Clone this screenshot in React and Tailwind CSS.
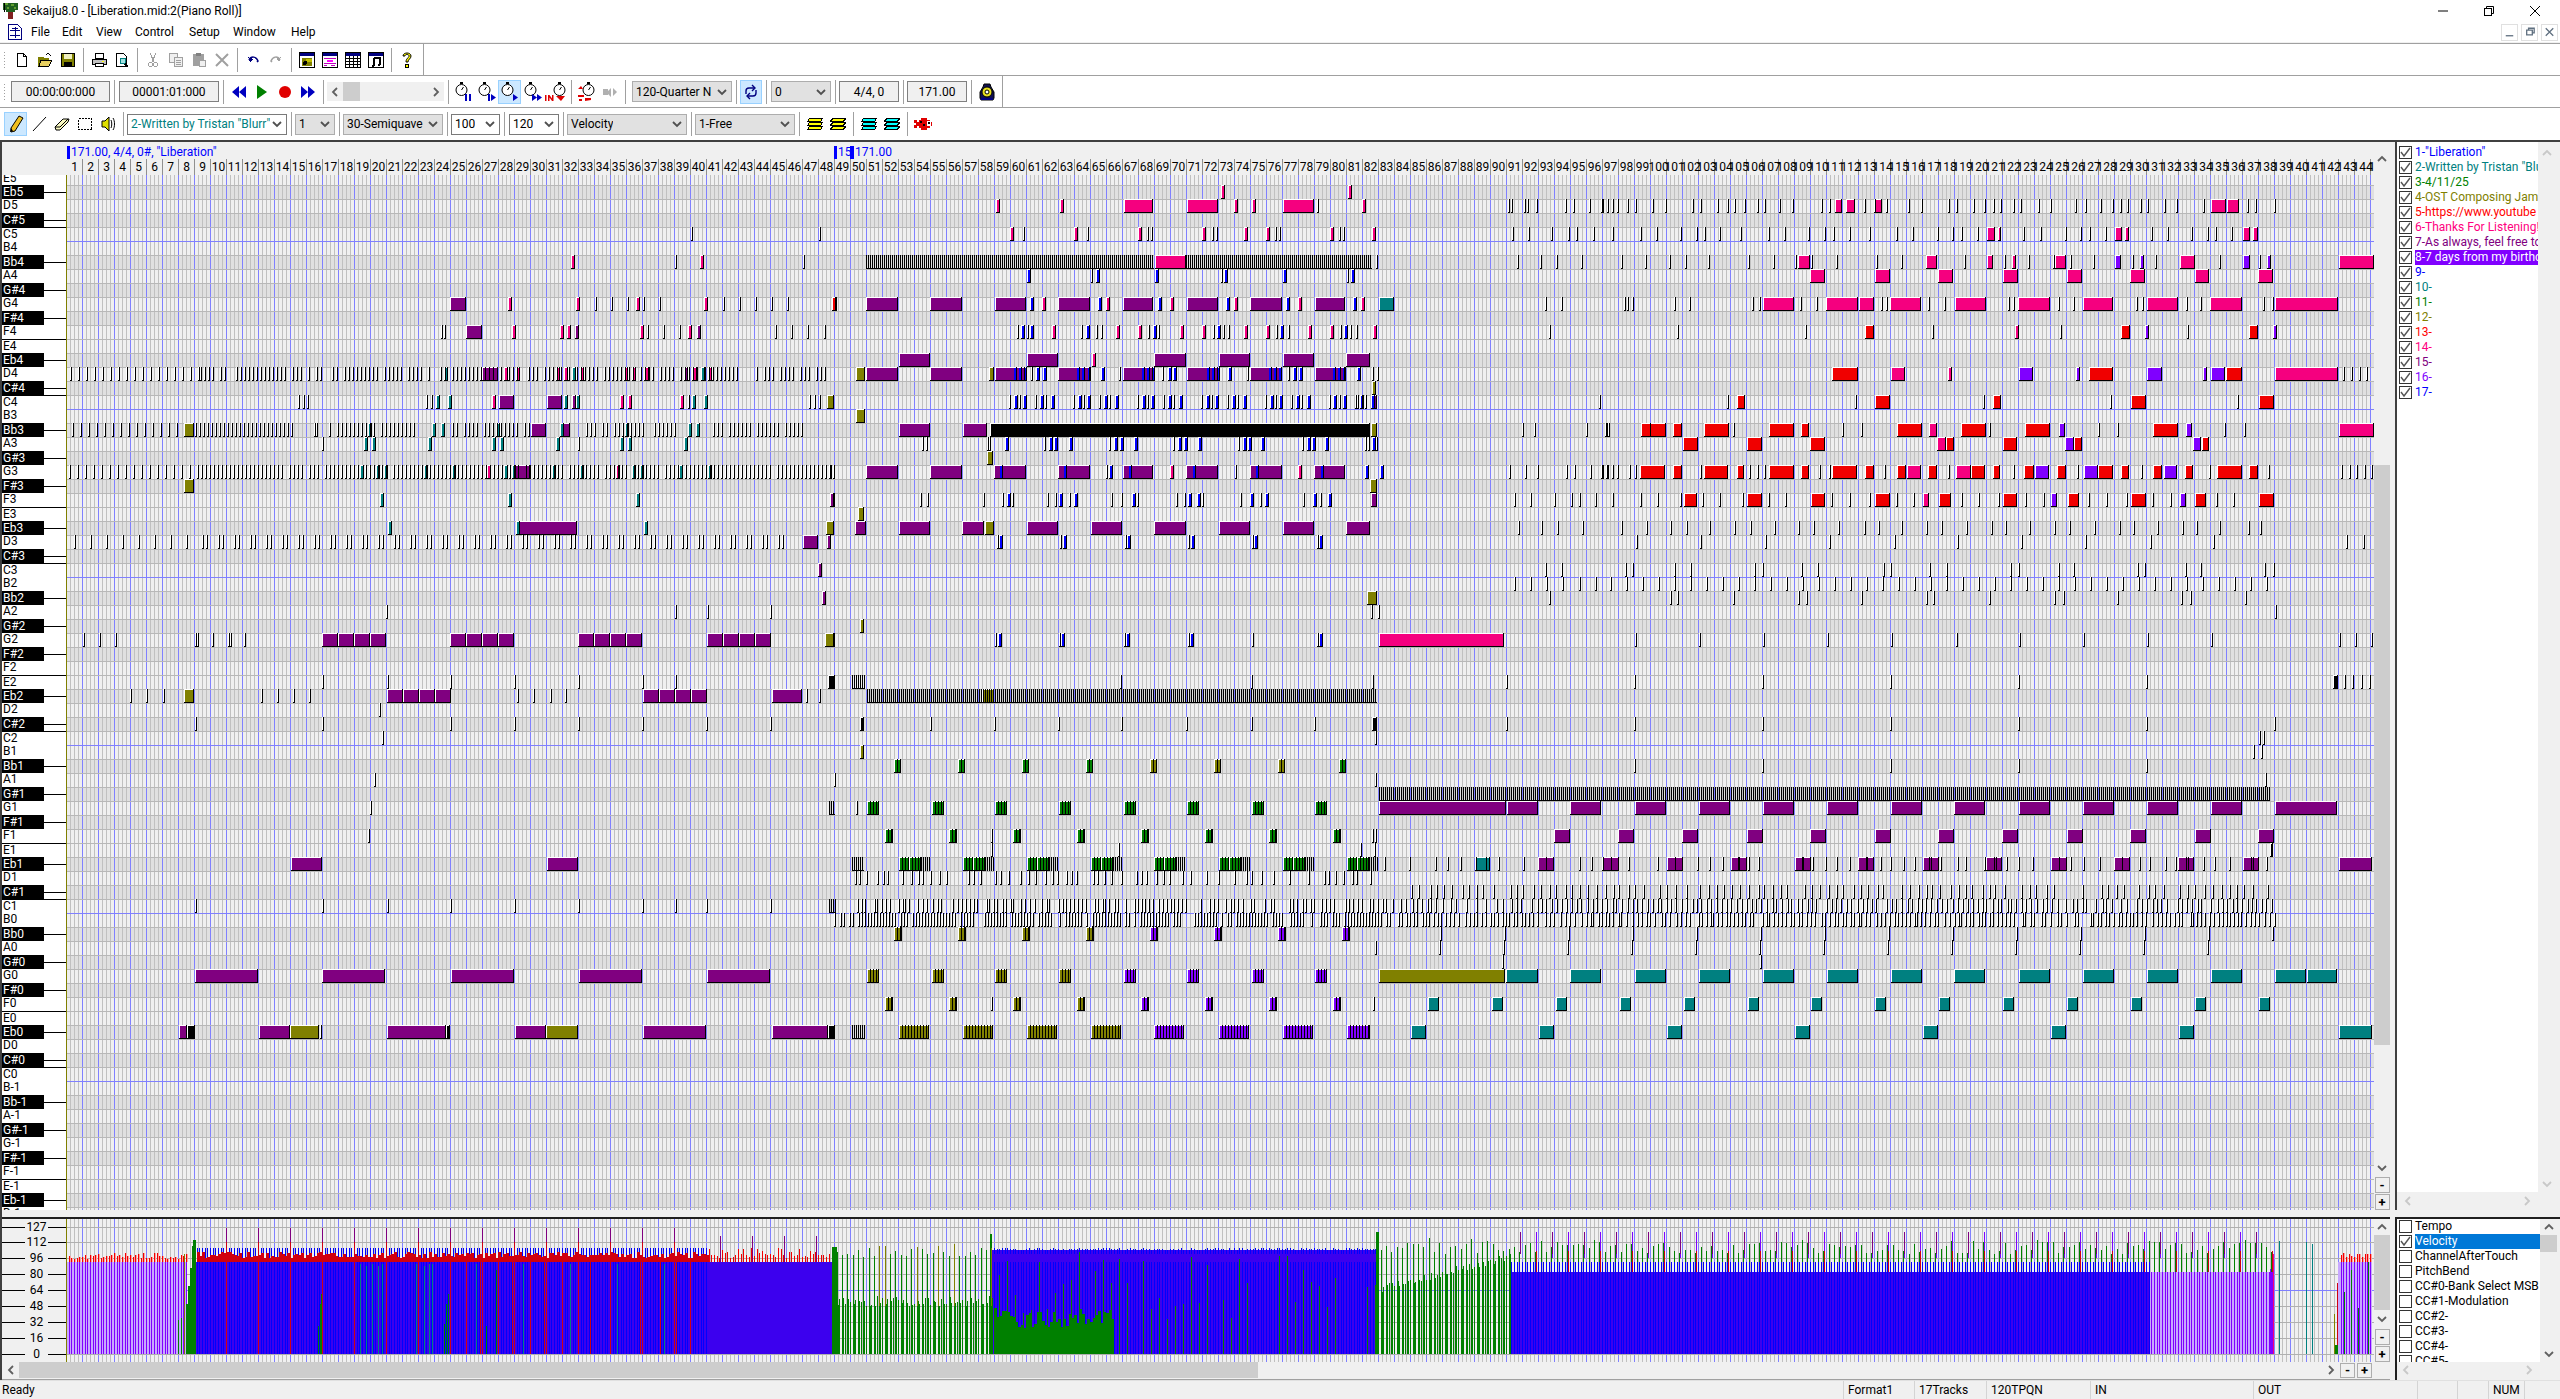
import React from 'react'

const PUR = '#800080', PINK = '#f5007f', OLV = '#808000', TEAL = '#008080', RED = '#f00000'
const VIO = '#8000ff', GRN = '#008000', BLU = '#0000ff'

// seeded noise so the picture stays the same between runs
let seed = 7
const rnd = () => {
  seed = (seed * 1664525 + 1013904223) % 4294967296
  return seed / 4294967296
}

const rect = (x, y, w, h) => `M${x} ${y}h${w}v${h}h${-w}z`

/* ---------- piano roll notes ---------- */
const white = []
const black = []
const fills = new Map()
const add = (c, d) => {
  if (!fills.has(c)) fills.set(c, [])
  fills.get(c).push(d)
}
const rowY = i => 185 + 14 * i

function note(i, a, b, c) {
  const x0 = Math.round(a), x1 = Math.round(b), y = rowY(i), w = x1 - x0
  white.push(rect(x0, y, 1, 14), rect(x0, y, w, 1))
  if (w > 2) add(c, rect(x0 + 1, y + 1, w - 2, 12))
  black.push(rect(x1 - 1, y, 1, 14), rect(x0, y + 13, w, 1))
}
const tick = (i, x) => note(i, x, x + 2, '#000')
const ctick = (i, x, c) => note(i, x, x + 4, c)
function hatch(i, a, b, step = 2) {
  for (let x = a; x < b; x += step) black.push(rect(x, rowY(i), 1, 14))
  black.push(rect(a, rowY(i) + 13, b - a, 1))
}
const each = (a, b, s, fn) => {
  for (let x = a; x <= b; x += s) fn(x)
}
// short overlapping notes that read as a striped block
function grp(i, a, b, c) {
  note(i, a, b, c)
  each(a + 3, b - 2, 3, t => black.push(rect(t, rowY(i), 1, 14)))
}

// numbers are read off the reference at these scales
const za = x => 60 + x / 2.01
const zb = x => 830 + x / 2.01
const zc = x => 1600 + x / 2.01
const zd = x => 60 + x / 1.3067
const ze = x => 1220 + x / 1.352

function row(i, z, list) {
  list.forEach(it => {
    if (typeof it === 'number') {
      if (it < 0) ctick(i, z(-it), BLU)
      else tick(i, z(it))
    } else if (it.length === 2) ctick(i, z(it[0]), it[1])
    else note(i, z(it[0]), z(it[1]), it[2])
  })
}
const pk = x => [x, PINK]
const tl = x => [x, TEAL]

function fourths(i, a, c) {
  each(0, 3, 1, k => note(i, a + k * 16, a + (k + 1) * 16, c))
}

function buildNotes() {
  row(3, za, [1268, 1526])
  row(5, za, [pk(1028), 1236, pk(1287), 1494])
  row(8, za, [[783, 816, PUR], pk(900), pk(1038), 1075, 1108, 1140, pk(1157), 1172, 1204, pk(1295), 1333, 1365, 1397, 1430, 1462, [1553, RED]])
  row(10, za, [766, 772, [817, 848, PUR], pk(908), pk(1005), pk(1020), [1035, PUR], pk(1165), 1180, 1212, 1245, pk(1262), [1280, PUR], 1437, 1470, 1502, 1535])
  each(70, 200, 8, x => tick(13, x))
  each(200, 830, 4, x => { if (rnd() > 0.22) tick(13, x) })
  row(13, za, [tl(772), [849, 880, PUR], pk(892), pk(917), pk(997), pk(1013), tl(1029), pk(1046), pk(1133), pk(1150), pk(1175), [1255, PUR], pk(1272), tl(1288), pk(1303)])
  row(15, za, [478, 488, 496, 735, 745, tl(755), tl(780), pk(868), [882, 913, PUR], [979, 1010, PUR], tl(1013), [1029, PUR], tl(1037), pk(1126), pk(1141), pk(1246), 1262, tl(1270), tl(1295), 1505, 1515, 1525, [1541, 1556, OLV]])
  each(72, 176, 8, x => tick(17, x))
  each(195, 291, 4, x => tick(17, x))
  row(17, za, [[250, 269, OLV], 510, 515, tl(620), tl(748), tl(765), tl(877), [946, 977, PUR], tl(1005), [1010, 1026, PUR], tl(1135), tl(1262), tl(1278)])
  each(329, 418, 4, x => { if (rnd() > 0.1) tick(17, x) })
  each(452, 528, 4, x => { if (rnd() > 0.1) tick(17, x) })
  each(586, 675, 4, x => { if (rnd() > 0.15) tick(17, x) })
  each(713, 804, 4, x => { if (rnd() > 0.15) tick(17, x) })
  row(18, za, [527, tl(611), tl(627), tl(740), tl(868), tl(885), tl(997), 1041, tl(1125), tl(1141), tl(1254)])
  each(69, 189, 8, x => tick(20, x))
  each(197, 834, 4, x => { if (rnd() > 0.1) tick(20, x) })
  row(20, za, [tl(603), tl(635), tl(651), tl(732), tl(788), pk(859), tl(892), tl(908), [915, 945, PUR], tl(989), tl(1046), pk(1118), tl(1150), tl(1165), tl(1245), tl(1303)])
  row(21, za, [[250, 269, OLV]])
  row(22, za, [tl(643), tl(901), tl(1158), [1548, 1558, PUR]])
  row(24, za, [tl(659), tl(917), [918, 1040, PUR], tl(1174), [1540, 1556, OLV]])
  each(74, 186, 16, x => tick(25, x))
  each(202, 790, 16, x => { tick(25, x); tick(25, x + 4) })
  row(25, za, [[1493, 1524, PUR], [1541, 1549, PUR]])
  row(27, za, [[1524, 1532, PUR]])
  row(29, za, [[1532, 1540, PUR]])
  row(30, za, [656, 1236, 1300, 1428])
  row(32, za, [46, 78, 110, 272, 276, 305, 338, 342, 370, [1538, 1557, OLV]])
  ;[322, 450, 578, 707].forEach(x => fourths(32, x, PUR))

  // middle section, measures 50-100
  row(0, zb, [pk(785), pk(1041)])
  row(1, zb, [pk(334), pk(462), [590, 650, PINK], [717, 779, PINK], pk(812), pk(848), [911, 973, PINK], 978, pk(1069), 1363, 1368, 1395, 1400, 1420, 1478, 1493, 1525, 1550, 1562])
  row(3, zb, [pk(362), 388, pk(490), 517, pk(619), 637, 645, pk(747), 767, 775, pk(832), pk(876), 895, 903, pk(1005), 1023, 1031, pk(1090), 1370, 1403, 1450, 1483, 1500, 1533])
  hatch(5, 866, 1154)
  hatch(5, 1186, 1372)
  row(5, zb, [[653, 715, PINK], 1097, 1380, 1428, 1460, 1510])
  row(6, zb, [-395, 525, -535, -653, 785, -792, -910, 1040, -1048])
  row(8, zb, [[5, RED], [73, 136, PUR], [202, 265, PUR], [331, 394, PUR], -403, pk(426), [459, 522, PUR], -538, pk(555), [588, 650, PUR], -660, pk(684), [717, 779, PUR], -795, pk(812), [845, 908, PUR], -917, pk(941), [974, 1036, PUR], -1052, pk(1068), [1103, 1134, TEAL], 1437, 1470])
  row(10, zb, [375, -384, 395, -402, pk(446), 505, -515, 535, 545, pk(575), pk(619), 640, -650, 660, pk(704), pk(747), 770, -778, 790, 800, pk(832), pk(876), 897, -905, 920, pk(961), pk(1005), 1025, -1033, 1045, 1058, pk(1092), 1445])
  row(12, zb, [[138, 201, PUR], [395, 458, PUR], pk(527), [652, 716, PUR], [781, 844, PUR], [911, 973, PUR], [1038, 1085, PUR]])
  row(13, zb, [[53, 70, OLV], [73, 136, PUR], [202, 265, PUR], [320, 330, OLV], [331, 392, PUR], -368, -378, -388, 405, -415, -428, [459, 522, PUR], -495, -505, -516, -545, 580, [588, 650, PUR], -625, -635, -645, 668, -680, -690, [717, 779, PUR], -755, -765, -775, -800, 838, [845, 908, PUR], -880, -890, -900, 920, -930, -942, [974, 1036, PUR], -1010, -1020, -1030, -1060, 1090, 1100])
  row(14, zb, [[1090, 1098, OLV]])
  each(0, 5, 1, k => {
    const a = 360 + k * 128.6
    row(15, zb, [a, -(a + 9), a + 20, -(a + 28), a + 52, -(a + 62), a + 72, -(a + 84)])
  })
  row(15, zb, [[0, 8, OLV], 1060, 1068, [1092, 1100, PUR], 1545])
  row(16, zb, [[53, 70, OLV]])
  row(17, zb, [[138, 201, PUR], [267, 316, PUR], [322, 1085, '#000'], [1087, 1100, OLV], 1390, 1415, 1520, 1560])
  row(18, zb, [185, 192, 315, 320, -352, 430, -440, -450, -480, 560, -570, -582, -612, 690, -700, -712, -740, 820, -830, -840, -866, 948, -958, -968, -995, 1075, 1082, -1090, 1098])
  row(19, zb, [[315, 328, OLV]])
  row(20, zb, [0, [73, 136, PUR], [200, 265, PUR], [330, 393, PUR], -340, [458, 522, PUR], -468, 555, -560, [588, 650, PUR], -598, pk(683), [716, 779, PUR], -728, 815, [845, 908, PUR], -855, pk(941), [972, 1036, PUR], -985, -1075, -1105, 1365, 1397, 1422, 1480, 1495, 1527, 1550, 1560])
  row(21, zb, [[1085, 1100, OLV]])
  row(22, zb, [[0, 8, PUR], 180, 195, 308, 345, -355, 365, 437, 453, -460, 480, -490, 565, 585, -608, 618, 695, 712, -720, -738, 748, 825, -845, 865, -875, 950, -970, 985, -1000, [1088, 1100, PUR], 1375, 1407, 1455, 1490, 1505, 1537])
  row(23, zb, [[57, 68, OLV]])
  row(24, zb, [[0, 8, OLV], [50, 72, PUR], [138, 201, PUR], [266, 310, PUR], [311, 330, OLV], [395, 458, PUR], [525, 587, PUR], [652, 716, PUR], [781, 844, PUR], [911, 973, PUR], [1038, 1085, PUR], 1382, 1430, 1462, 1512])
  row(25, zb, [335, -340, 463, -468, 592, -597, 720, -725, 849, -853, 978, -983])
  row(27, zb, [1438, 1470])
  row(28, zb, [1375, 1408, 1440, 1472, 1505, 1537])
  row(29, zb, [[1080, 1100, OLV], 1445])
  row(30, zb, [1087, 1102])
  row(31, zb, [[60, 68, OLV]])
  row(32, zb, [[0, 8, OLV], 332, -337, 460, -465, 590, -595, 720, -723, 848, 978, -982, [1103, 1354, PINK]])

  // right hand section
  row(1, zc, [5, 15, 25, 35, 55, 70, 105, 130, 185, 200, 235, 255, 270, 290, 315, 330, 360, 385, 445, 460, [472, 487, PINK], [495, 512, PINK], 530, 550, [552, 567, PINK], 575, 620, 645, 700, 715, 750, 772, 790, 805, 830, 845, 880, 905, 955, 975, 1005, 1030, 1045, 1060, 1085, 1100, 1133, 1158, 1212, [1228, 1258, PINK], [1260, 1285, PINK], 1300, 1317, 1355])
  row(3, zc, [25, 80, 113, 160, 192, 210, 240, 282, 338, 370, 418, 450, 468, 500, 540, 595, 627, 677, 708, 725, 757, [778, 793, PINK], [800, 807, PINK], 850, 885, 935, 965, 982, 1015, [1035, 1050, PINK], [1055, 1064, PINK], 1108, 1140, 1188, 1220, 1237, 1268, [1292, 1307, PINK], [1312, 1322, PINK]])
  row(5, zc, [42, 90, 138, 170, 218, 298, 347, 392, [398, 422, PINK], 425, 475, 555, 605, [655, 678, PINK], 732, [778, 790, PINK], 812, pk(828), 860, 910, [915, 937, PINK], 945, 990, [1035, 1048, VIO], 1070, [1085, VIO], 1116, [1165, 1195, PINK], 1245, [1293, 1306, VIO], 1325, [1341, VIO], [1485, 1555, PINK]])
  ;[423, 552, 680, 810, 938, 1066, 1195, 1323].forEach(a => row(6, zc, [[a, a + 30, PINK]]))
  row(8, zc, [48, 55, 65, 148, 178, 305, 320, [327, 389, PINK], 403, 435, [455, 518, PINK], [520, 550, PINK], 565, 575, [583, 646, PINK], 660, 692, [713, 775, PINK], 820, 830, [841, 904, PINK], 920, 950, [970, 1032, PINK], 1078, 1090, [1099, 1162, PINK], 1177, 1205, [1227, 1290, PINK], 1333, 1350, [1356, 1483, PINK]])
  row(10, zc, [155, 412, [533, 551, RED], 668, pk(835), 925, [1047, 1065, RED], [1095, VIO], 1180, [1305, 1323, RED], [1352, VIO]])
  row(13, zc, [[467, 518, RED], [585, 614, PINK], pk(700), [842, 871, VIO], [957, VIO], [983, 1032, RED], [1100, 1130, VIO], [1213, VIO], [1228, 1257, VIO], [1258, 1290, RED], [1356, 1483, PINK], 1493, 1510, 1525, 1540])
  row(15, zc, [255, [275, 292, RED], 512, [553, 582, RED], 770, [790, 807, RED], 1025, [1067, 1097, RED], 1280, [1325, 1354, RED]])
  row(17, zc, [10, 16, [82, 133, RED], 98, [147, 164, RED], [210, 260, RED], 268, [340, 390, RED], [404, 420, RED], 487, 525, [597, 647, RED], [662, 678, PINK], [726, 775, RED], 782, [855, 905, RED], [923, 935, VIO], 1000, 1040, [1112, 1162, RED], [1178, 1190, VIO], 1255, 1295, [1485, 1555, PINK]])
  row(18, zc, [[167, 196, RED], [295, 325, RED], [423, 453, RED], [677, 695, PINK], [696, 711, RED], [810, 838, RED], [935, 952, VIO], [953, 968, RED], [1192, 1208, VIO], [1210, 1225, RED]])
  row(20, zc, [5, 15, 25, 35, 58, 70, [80, 130, RED], [147, 164, RED], 200, [210, 258, RED], [275, 290, RED], 300, 315, 330, [340, 390, RED], [404, 420, RED], 440, 460, [467, 517, RED], [532, 550, RED], 570, [596, 616, RED], [618, 645, PINK], [660, 678, RED], 700, [715, 745, PINK], [745, 773, RED], [790, 805, RED], 830, [853, 873, RED], [875, 903, VIO], [919, 936, RED], 958, [972, 1000, VIO], [1000, 1032, RED], [1047, 1063, RED], 1088, [1112, 1130, RED], [1133, 1160, VIO], [1175, 1192, RED], 1225, [1240, 1290, RED], [1305, 1322, RED], 1343, 1490, 1505, 1520, 1535, 1550])
  row(22, zc, [25, 80, 115, 160, [168, 195, RED], 205, 240, 285, [296, 325, RED], 338, 372, [425, 452, RED], 465, 500, 540, [553, 582, RED], 595, 630, [650, 661, PINK], [682, 705, RED], 725, 760, 800, [810, 838, RED], 855, 890, [907, 919, VIO], [940, 962, RED], 980, 1017, 1058, [1067, 1097, RED], 1110, 1145, [1165, 1177, VIO], [1195, 1218, RED], 1238, 1272, [1325, 1354, RED]])
  row(24, zc, [42, 92, 140, 172, 220, 270, 302, 350, 397, 428, 478, 530, 558, 605, 655, 685, 735, 785, 815, 862, 912, 942, 992, 1043, 1072, 1120, 1170, 1198, 1245, 1302, 1327])
  row(25, zc, [72, 202, 332, 460, 590, 718, 846, 975, 1105, 1233, 1500, 1533])
  row(27, zc, [50, 65, 148, 180, 310, 325, 405, 437, 568, 582, 662, 695, 825, 840, 920, 950, 1080, 1093, 1175, 1205, 1335, 1352])
  each(1610, 2266, 16, x => tick(28, x))
  row(29, zc, [140, 155, 268, 397, 415, 525, 655, 670, 782, 912, 930, 1040, 1168, 1185, 1297])
  row(30, zc, [1356])
  row(32, zc, [70, 198, 327, 457, 585, 715, 842, 970, 1100, 1228, 1485, 1517, 1550])

  // lower half
  row(35, zd, [342, 427, 510, 593, 677, 760, 803, [1004, 1013, '#000'], 1385])
  hatch(35, 852, 865)
  row(35, ze, [42, 205, 387, 560, 733, 906, 1079, 1252, [1505, 1512, '#000'], 1520, 1530, 1542, 1553])
  row(36, zd, [92, 113, 134, [162, 175, OLV], 262, 283, 304, 325, 597, 618, 640, 660, [930, 970, PUR], 975, 992])
  fourths(36, 387, PUR)
  fourths(36, 643, PUR)
  hatch(36, 867, 1377)
  row(36, zd, [[1205, 1220, OLV]])
  row(37, zd, [417])
  row(38, zd, [176, 343, 510, 593, 677, 760, 844, 928, [1046, 1051, '#000'], 1137, 1220, 1304, 1387, 1471])
  row(38, ze, [42, 127, [205, 212, '#000'], 387, 560, 733, 906, 1079, 1252, 1425])
  row(39, zd, [421])
  row(39, ze, [210, 1405, 1410])
  row(40, zd, [[1046, 1051, OLV]])
  row(40, ze, [1397, 1408])
  ;[894, 958, 1022, 1086].forEach(x => grp(41, x, x + 7, GRN))
  ;[1150, 1214, 1278].forEach(x => grp(41, x, x + 7, OLV))
  grp(41, 1339, 1346, GRN)
  row(41, ze, [560, 733, 906, 1079, 1252])
  row(42, zd, [410, 1011])
  row(42, ze, [210, 1413])
  hatch(43, 1379, 2270)
  row(44, zd, [405, 1040])
  hatch(44, 829, 835)
  ;[867, 932, 995, 1059, 1124, 1187, 1252, 1315].forEach(x => grp(44, x, x + 12, GRN))
  note(44, 1379, 1506, PUR)
  note(44, 1507, 1538, PUR)
  ;[1570, 1635, 1699, 1763, 1827, 1891, 1954, 2019, 2083, 2147, 2211].forEach(x => { note(44, x, x + 31, PUR); note(56, x, x + 31, TEAL); white.push(rect(x + 3, rowY(56), 1, 13)) })
  note(44, 2275, 2337, PUR)
  row(46, zd, [402, 1217])
  ;[885, 949, 1013, 1077, 1141, 1205, 1269, 1333].forEach(x => grp(46, x, x + 8, GRN))
  tick(46, 1372); tick(46, 1375)
  ;[1554, 1618, 1682, 1747, 1810, 1875, 1938, 2002, 2067, 2130, 2195, 2258].forEach(x => note(46, x, x + 16, PUR))
  row(47, zd, [1217, 1383])
  row(47, ze, [189, 208, [1419, 1423, '#000']])
  note(48, 291, 322, PUR)
  note(48, 547, 578, PUR)
  hatch(48, 852, 864)
  ;[899, 963, 1027, 1091, 1154, 1219, 1283, 1347].forEach(x => {
    grp(48, x, x + 10, GRN)
    grp(48, x + 10, x + 22, GRN)
    each(x + 22, x + 30, 2, t => black.push(rect(t, rowY(48), 1, 14)))
  })
  note(48, 1475, 1490, TEAL)
  ;[1538, 1603, 1667, 1731, 1795, 1858, 1923, 1986, 2051, 2114, 2178, 2243].forEach(x => { note(48, x, x + 16, PUR); black.push(rect(x + 8, rowY(48), 1, 14)) })
  each(1380, 2270, 13, x => { if (rnd() > 0.25) tick(48, x + rnd() * 6) })
  note(48, 2339, 2372, PUR)
  each(852, 1372, 7, x => { if (rnd() > 0.2) tick(49, x + rnd() * 4) })
  each(1386, 2270, 8, x => { if (rnd() > 0.15) tick(50, x + rnd() * 4) })
  row(51, zd, [176, 343, 427, 510, 593, 677, 760, 803, 844, 928])
  hatch(51, 829, 836)
  each(852, 1377, 4, x => { if (rnd() > 0.2) tick(51, x + rnd() * 2) })
  each(1380, 2272, 5, x => { if (rnd() > 0.12) tick(51, x + rnd() * 2) })
  each(834, 1377, 3, x => { if (rnd() > 0.2) tick(52, x) })
  each(1380, 2272, 4, x => { if (rnd() > 0.1) tick(52, x + rnd() * 2) })
  ;[894, 958, 1022, 1086].forEach(x => grp(53, x, x + 8, OLV))
  ;[1150, 1214, 1278, 1342].forEach(x => grp(53, x, x + 8, VIO))
  each(1440, 2273, 64, x => tick(53, x))
  each(1375, 2270, 64, x => tick(54, x))
  tick(55, 1502)
  tick(55, 1760)
  ;[195, 322, 451, 579, 707].forEach(x => note(56, x, x + 63, PUR))
  ;[867, 932, 995, 1059].forEach(x => grp(56, x, x + 12, OLV))
  ;[1124, 1187, 1252, 1315].forEach(x => grp(56, x, x + 12, VIO))
  note(56, 1379, 1505, OLV)
  note(56, 1506, 1538, TEAL)
  note(56, 2275, 2306, TEAL)
  note(56, 2307, 2337, TEAL)
  ;[885, 949, 1013, 1077].forEach(x => grp(58, x, x + 8, OLV))
  tick(58, 991)
  ;[1141, 1205, 1269, 1333].forEach(x => grp(58, x, x + 8, VIO))
  tick(58, 1373)
  each(1428, 2259, 63.9, x => note(58, x, x + 11, TEAL))
  note(60, 179, 187, PUR); note(60, 187, 195, '#000')
  note(60, 259, 290, PUR); note(60, 290, 319, OLV); tick(60, 320)
  note(60, 387, 446, PUR); note(60, 446, 450, '#000')
  note(60, 515, 546, PUR); note(60, 546, 578, OLV)
  note(60, 643, 706, PUR)
  note(60, 772, 828, PUR); note(60, 828, 835, '#000')
  hatch(60, 852, 865)
  ;[899, 963, 1027, 1091].forEach(x => { grp(60, x, x + 30, OLV) })
  ;[1154, 1219, 1283, 1347].forEach(x => { grp(60, x, x + (x === 1347 ? 23 : 30), VIO) })
  ;[1411, 1539, 1667, 1795, 1923, 2051, 2179].forEach(x => note(60, x, x + 15, TEAL))
  note(60, 2339, 2372, TEAL)
}
buildNotes()

/* ---------- velocity bars ---------- */
const MIX = '#3c00ee'
const DRED = '#d00010'
const LAV = '#c8a8ff'
const ROSE = '#ffa0a0'
const velo = new Map([[LAV, []], [ROSE, []], [VIO, []], [MIX, []], [BLU, []], [RED, []], [DRED, []], [GRN, []], [TEAL, []], [PUR, []], [PINK, []], [OLV, []], ['#70e000', []], ['#00e0e0', []]])
const bar = (x, w, lo, hi, c) => velo.get(c).push(rect(Math.round(x), 1354 - hi, w, hi - lo))

function buildVelocity() {
  bar(66, 1, 0, 92, '#70e000')
  bar(66, 1, 92, 100, '#00e0e0')
  bar(67, 119, 0, 92, LAV)
  bar(2149, 121, 0, 82, LAV)
  bar(2338, 34, 0, 92, LAV)
  bar(194, 512, 0, 92, MIX)
  bar(706, 126, 0, 92, MIX)
  bar(992, 385, 0, 104, MIX)
  bar(1510, 639, 0, 82, MIX)
  for (let x = 68.6; x < 2372; x += 8 / 3) {
    const r = rnd(), q = rnd()
    const n = Math.round(x * 3 / 8)
    if (x < 186) {
      bar(x, 1, 0, 92, VIO)
      bar(x, 2, 92, 95 + r * 6, ROSE)
      bar(x, 1, 92, 95 + r * 6, RED)
    } else if (x >= 194 && x < 706) {
      bar(x, 1, 92, 106, BLU)
      bar(x, 1, 0, 92, BLU)
      bar(x, 3, 92, 96 + r * 6, DRED)
    } else if (x >= 706 && x < 830) {
      bar(x, 1, 92, 96 + r * 10, RED)
      bar(x, 1, 0, 92, VIO)
    } else if (x >= 992 && x < 1377) {
      bar(x, 1, 0, 92, BLU)
      bar(x, 1, 100, 104 + r * 2, BLU)
    } else if (x >= 1510 && x < 2149) {
      bar(x, 1, 82, 92, BLU)
      bar(x, 1, 0, 82, BLU)
    } else if (x >= 2149 && x < 2272) {
      bar(x, 1, 0, 82, VIO)
    } else if (x >= 2338) {
      bar(x, 1, 0, 92, VIO)
      bar(x, 2, 92, 96 + r * 5, ROSE)
      bar(x, 1, 92, 96 + r * 5, RED)
    }
    if (x >= 836 && x < 992) {
      bar(x, n % 2 ? 1 : 2, 0, 48 + q * 10, GRN)
      if (n % 2 === 0) bar(x, 1, 48, 96 + r * 14, r > 0.7 ? OLV : GRN)
    }
    if (x >= 1377 && x < 1510) {
      const t = (x - 1377) / 133
      bar(x, n % 2 ? 1 : 2, 0, 60 + t * 34 + q * 8, GRN)
      if (n % 2 === 0) bar(x, 1, 60, 100 + r * 16, GRN)
    }
    if (x >= 992 && x < 1112) bar(x, 3, 0, 24 + r * 22, GRN)
    if (x >= 992 && x < 1377 && n % 3 === 0 && q > 0.35) {
      bar(x, 1, x < 1112 ? 20 : 0, 35 + r * 70, GRN)
    }
    if (x >= 1510 && x < 2272 && n % 2 === 0) {
      bar(x, 1, x < 2149 ? 92 : 82, 100 + r * 14, GRN)
    }
  }
  for (let x = 226; x < 706; x += 32) {
    bar(x, 1, 0, 112, DRED)
    bar(x, 1, 112, 126, PUR)
  }
  bar(178, 1, 0, 34, GRN)
  bar(181, 1, 0, 36, GRN)
  bar(184, 1, 0, 100, OLV)
  ;[[186, 50], [188, 68], [190, 86], [192, 108], [193, 114]].forEach(([x, h]) => bar(x, 3, 0, h, GRN))
  ;[[318, 28], [320, 50], [321, 60], [486, 28], [496, 84], [360, 90], [366, 88], [372, 90], [378, 88], [416, 90], [424, 88], [432, 90], [444, 30], [446, 50], [448, 60]].forEach(([x, h]) => bar(x, 1, 0, h, x > 350 && x < 436 ? TEAL : GRN))
  for (let x = 382; x < 700; x += 47) bar(x, 1, 0, 90, TEAL)
  ;[466, 480, 498, 512, 530, 544, 562, 590, 610, 640, 660, 676, 690].forEach(x => bar(x, 1, 0, 96, DRED))
  bar(832, 5, 0, 107, GRN)
  bar(990, 2, 0, 120, GRN)
  bar(1376, 3, 0, 122, GRN)
  for (let x = 1520; x < 2272; x += 32) {
    bar(x, 1, 100, 122, PUR)
    bar(x + 16, 1, 82, 103, DRED)
  }
  for (let x = 1536; x < 2272; x += 16) bar(x, 1, 96, 122, VIO)
  for (let x = 720; x < 832; x += 32) bar(x, 1, 92, 118, PUR)
  bar(2270, 3, 0, 85, VIO)
  bar(2273, 1, 0, 100, PINK)
  bar(2279, 1, 0, 113, TEAL)
  bar(2306, 1, 0, 112, TEAL)
  bar(2312, 1, 0, 110, TEAL)
  bar(2334, 1, 0, 40, OLV)
  bar(2335, 3, 0, 9, GRN)
  bar(2337, 1, 0, 71, DRED)
  ;[2344, 2351, 2358, 2368].forEach((x, i) => bar(x, 1, 0, [62, 84, 46, 92][i], GRN))
}
buildVelocity()

/* ---------- keyboard ---------- */
const NAMES = ['C', 'C#', 'D', 'Eb', 'E', 'F', 'F#', 'G', 'G#', 'A', 'Bb', 'B']
const KEYS = []
for (let p = 76; p >= 2; p--) {
  const n = NAMES[p % 12]
  KEYS.push({ p, n, label: `${n}${Math.floor(p / 12) - 1}`, black: n.length > 1 })
}

function Keyboard() {
  return (
    <div className="h-[1035px] w-[65px] shrink-0 overflow-hidden border-r border-[#808000] bg-white">
      <div className="-mt-[4px]">
        {KEYS.map(k => k.black ? (
          <div key={k.p} className="flex h-[14px] items-center">
            <div className="h-[14px] w-[42px] bg-black pl-[1px] text-[12px] leading-[14px] text-white">{k.label}</div>
            <div className="h-px flex-1 bg-black" />
          </div>
        ) : (
          <div key={k.p} className={`h-[14px] pl-[1px] text-[12px] leading-[13px] text-black ${k.n === 'E' || k.n === 'C' ? 'border-t border-black' : ''}`}>{k.label}</div>
        ))}
      </div>
    </div>
  )
}

const blackRows = KEYS.filter(k => k.black).map(k => rect(67, rowY(75 - k.p), 2307, 14)).join('')

function RollCanvas() {
  return (
    <svg width="2307" height="1035" viewBox="67 175 2307 1035" shapeRendering="crispEdges" className="block shrink-0">
      <defs>
        <pattern id="vgrid" patternUnits="userSpaceOnUse" x="66" y="0" width="16" height="14">
          <rect x="4" width="1" height="14" fill="#c0c0c0" />
          <rect x="8" width="1" height="14" fill="#c0c0c0" />
          <rect x="12" width="1" height="14" fill="#c0c0c0" />
          <rect x="0" width="1" height="14" fill="#8080ff" />
        </pattern>
      </defs>
      <rect x="67" y="175" width="2307" height="1035" fill="#f0f0f0" />
      <path d={blackRows} fill="#e0e0e0" />
      <rect x="67" y="175" width="2307" height="1035" fill="url(#vgrid)" />
      {KEYS.map(k => (
        <rect key={k.p} x="67" y={rowY(75 - k.p)} width="2307" height="1" fill={k.n === 'B' ? '#8080ff' : '#b8b8b8'} />
      ))}
      <path d={white.join('')} fill="#fff" />
      {[...fills.entries()].map(([c, d]) => <path key={c} d={d.join('')} fill={c} />)}
      <path d={black.join('')} fill="#000" />
    </svg>
  )
}

function VelocityCanvas() {
  const lines = [0, 16, 32, 48, 64, 80, 96, 112, 127]
  return (
    <svg width="2307" height="143" viewBox="67 1219 2307 143" shapeRendering="crispEdges" className="block shrink-0">
      <defs>
        <pattern id="vgrid2" patternUnits="userSpaceOnUse" x="66" y="0" width="16" height="14">
          <rect x="4" width="1" height="14" fill="#c0c0c0" />
          <rect x="8" width="1" height="14" fill="#c0c0c0" />
          <rect x="12" width="1" height="14" fill="#c0c0c0" />
          <rect x="0" width="1" height="14" fill="#8080ff" />
        </pattern>
      </defs>
      <rect x="67" y="1219" width="2307" height="143" fill="#f0f0f0" />
      <rect x="67" y="1219" width="2307" height="143" fill="url(#vgrid2)" />
      {lines.map(v => (
        <rect key={v} x="67" y={1354 - v} width="2307" height="1" fill={v === 64 ? '#8080ff' : '#b0b0b0'} />
      ))}
      {[...velo.entries()].map(([c, d]) => <path key={c} d={d.join('')} fill={c} />)}
    </svg>
  )
}

/* ---------- small widgets ---------- */
function Chev({ dir = 'down', color = '#606060', size = 10 }) {
  const d = { down: 'M1 3l4 4 4-4', up: 'M1 7l4-4 4 4', left: 'M7 1L3 5l4 4', right: 'M3 1l4 4-4 4' }[dir]
  return (
    <svg width={size} height={size} viewBox="0 0 10 10" fill="none" stroke={color} strokeWidth="1.8" className="shrink-0">
      <path d={d} />
    </svg>
  )
}

const Sep = () => (
  <div className="flex h-[24px] w-[8px] shrink-0 justify-center">
    <div className="h-full w-px bg-[#a0a0a0]" />
  </div>
)

const Grip = () => (
  <div className="absolute left-[3px] top-[7px] h-[18px] w-[3px] bg-[radial-gradient(circle,#a0a0a0_1px,transparent_1px)] bg-[length:3px_3px]" />
)

function Btn({ active, w = 'w-[23px]', children }) {
  return (
    <div className={`flex h-[24px] shrink-0 items-center justify-center ${w} ${active ? 'border border-[#99d1ff] bg-[#cce8ff]' : ''}`}>
      {children}
    </div>
  )
}

function Sel({ w, white: isWhite, color = 'text-black', children }) {
  return (
    <div className={`flex h-[21px] shrink-0 items-center justify-between overflow-hidden border pl-[3px] pr-[4px] text-[12px] ${w} ${color} ${isWhite ? 'border-[#7a7a7a] bg-white' : 'border-[#adadad] bg-[#e1e1e1]'}`}>
      <span className="overflow-hidden whitespace-nowrap">{children}</span>
      <Chev color="#505050" />
    </div>
  )
}

const Box = ({ w, children }) => (
  <div className={`flex h-[21px] shrink-0 items-center justify-center border border-[#808080] bg-[#f0f0f0] text-[12px] text-black ${w}`}>{children}</div>
)

/* ---------- toolbar icons ---------- */
const Ico = ({ children, w = 16, h = 16, view }) => (
  <svg width={w} height={h} viewBox={view || `0 0 ${w} ${h}`} shapeRendering="crispEdges" className="shrink-0">{children}</svg>
)

const IconNew = () => <Ico><path d="M3.5 1.5h6l3 3v10h-9z" fill="#fff" stroke="#000" /><path d="M9.5 1.5v3h3" fill="none" stroke="#000" /></Ico>
const IconOpen = () => <Ico><path d="M1 5h5l1 1h5v2H4l-2 6H1z" fill="#808000" /><path d="M2 14l2-6h11l-3 6z" fill="#e8d060" stroke="#000" /><path d="M9 3l2-2 3 3" fill="none" stroke="#000" /></Ico>
const IconSave = () => <Ico><rect x="1.5" y="1.5" width="13" height="13" fill="#808000" stroke="#000" /><rect x="4" y="2" width="8" height="5" fill="#f0f0c0" /><rect x="4" y="10" width="8" height="4" fill="#000" /></Ico>
const IconPrint = () => <Ico><rect x="4.5" y="1.5" width="8" height="5" fill="#fff" stroke="#000" /><path d="M1.5 7.5h14v5h-14z" fill="#c0c0c0" stroke="#000" /><rect x="4.5" y="11.5" width="8" height="3" fill="#fff" stroke="#000" /><rect x="11" y="9" width="2" height="1" fill="#ff0" /></Ico>
const IconPreview = () => <Ico><path d="M2.5 1.5h7l3 3v10h-10z" fill="#fff" stroke="#000" /><circle cx="9" cy="9" r="3" fill="#a0e0e0" stroke="#008080" /><path d="M11 12l3 3" stroke="#000" strokeWidth="2" /></Ico>
const IconCut = () => <Ico><path d="M5 1l4 9M11 1L7 10" stroke="#a0a0a0" fill="none" /><circle cx="5.5" cy="12.5" r="2" fill="none" stroke="#a0a0a0" /><circle cx="10.5" cy="12.5" r="2" fill="none" stroke="#a0a0a0" /></Ico>
const IconCopy = () => <Ico><rect x="1.5" y="1.5" width="8" height="9" fill="#f0f0f0" stroke="#a0a0a0" /><rect x="6.5" y="5.5" width="8" height="9" fill="#f0f0f0" stroke="#a0a0a0" /><path d="M8 8h5M8 10h5M8 12h5" stroke="#a0a0a0" /></Ico>
const IconPaste = () => <Ico><rect x="2" y="2" width="11" height="12" fill="#a0a0a0" /><rect x="5" y="1" width="5" height="3" fill="#808080" /><rect x="8.5" y="8.5" width="6" height="6" fill="#f0f0f0" stroke="#a0a0a0" /></Ico>
const IconDel = () => <Ico><path d="M2 2l12 12M14 2L2 14" stroke="#a0a0a0" strokeWidth="2" shapeRendering="auto" /></Ico>
const IconUndo = ({ c = '#000080' }) => <Ico><path d="M3 5l2 5 3-3" fill={c} /><path d="M4 8c2-4 7-4 9 1l-1 1" fill="none" stroke={c} strokeWidth="1.5" shapeRendering="auto" /></Ico>
const IconUndoPath = () => <><path d="M3 5l2 5 3-3" fill="#a0a0a0" /><path d="M4 8c2-4 7-4 9 1l-1 1" fill="none" stroke="#a0a0a0" strokeWidth="1.5" shapeRendering="auto" /></>
const IconRedo = () => <Ico><g transform="matrix(-1 0 0 1 16 0)"><IconUndoPath /></g></Ico>
const WinIco = ({ children }) => <Ico><rect x="0.5" y="0.5" width="15" height="15" fill="#fff" stroke="#000" /><rect x="1" y="1" width="14" height="3" fill="#000080" />{children}</Ico>
const IconTracks = () => <WinIco><rect x="3" y="6" width="10" height="8" fill="#808000" /><rect x="7" y="7" width="6" height="3" fill="#c0c000" /><circle cx="6" cy="11" r="2" fill="#000" /></WinIco>
const IconRoll = () => <WinIco><path d="M2 6h12v1H2zM2 11h12v1H2z" fill="#c000c0" /><path d="M5 8h6v2H5z" fill="#ff00ff" /><path d="M2 13h3v1H2zM9 13h4v1H9z" fill="#c000c0" /></WinIco>
const IconGrid = () => <WinIco><path d="M1 6h14M1 9h14M1 12h14M4 4v11M8 4v11M12 4v11" stroke="#000" fill="none" /></WinIco>
const IconScore = () => <WinIco><path d="M6 6h6v7M6 6v8" fill="none" stroke="#000" strokeWidth="1.4" /><rect x="4" y="13" width="2" height="2" fill="#000" /><rect x="10" y="12" width="2" height="2" fill="#000" /></WinIco>
const IconHelp = () => <Ico h={18}><path d="M4 5c0-4 8-4 8 0 0 3-3 3-3 6H7c0-4 3-4 3-6s-4-2-4 0z" fill="#ff0" stroke="#000" shapeRendering="auto" /><rect x="6.5" y="13" width="3" height="3" fill="#ff0" stroke="#000" /></Ico>
const IconRew = () => <Ico><path d="M8 2v12L1 8zM15 2v12L8 8z" fill="#0000c0" shapeRendering="auto" /></Ico>
const IconFf = () => <Ico><path d="M1 2v12l7-6zM8 2v12l7-6z" fill="#0000c0" shapeRendering="auto" /></Ico>
const IconPlay = () => <Ico><path d="M3 1v14l10-7z" fill="#008000" shapeRendering="auto" /></Ico>
const IconRec = () => <Ico><circle cx="8" cy="8" r="6" fill="#e00000" shapeRendering="auto" /></Ico>

function Watch({ mark }) {
  return (
    <svg width="20" height="20" viewBox="0 0 20 20" className="shrink-0">
      <rect x="6" y="0" width="3" height="2" fill="#000" />
      <circle cx="7.5" cy="8" r="5.5" fill="#fff" stroke="#000" />
      <path d="M7.5 8l2-3" stroke="#000" />
      {mark}
    </svg>
  )
}
const markPause = <path d="M11 12h2v7h-2zM15 12h2v7h-2z" fill="#0000c0" />
const markStep = <path d="M11 12h2v7h-2zM14 12l5 3.5-5 3.5z" fill="#0000c0" />
const markPlay = <path d="M13 12l5 3.5-5 3.5z" fill="#0000c0" />
const markFf = <path d="M9 12l5 3.5-5 3.5zM14 12l5 3.5-5 3.5z" fill="#0000c0" />

const IconIn = () => (
  <svg width="24" height="20" viewBox="0 0 24 20" className="shrink-0">
    <rect x="14" y="0" width="3" height="2" fill="#000" />
    <circle cx="15.5" cy="8" r="5.5" fill="#fff" stroke="#000" />
    <path d="M15.5 8l2-3" stroke="#000" />
    <path d="M1 13h1.5v6H1zM4 13h1.5l2.5 3.5V13h1.5v6H8l-2.5-3.5V19H4zM12 14h9l-4 5z" fill="#e00000" />
  </svg>
)
const IconSync = () => (
  <svg width="20" height="20" viewBox="0 0 20 20" className="shrink-0">
    <rect x="10" y="0" width="3" height="2" fill="#000" />
    <circle cx="11.5" cy="8" r="5.5" fill="#fff" stroke="#000" />
    <path d="M11.5 8l2-3" stroke="#000" />
    <path d="M1 7h5l-2-3zM1 13h6v2H1zM8 16h6v2l-6 1zM2 17h3v2H2z" fill="#e00000" />
  </svg>
)
const IconSyncOff = () => <Ico><path d="M1 5h5v2l3-3v9l-3-3v1H1zM11 4l4 4-4 4z" fill="#b0b0b0" shapeRendering="auto" /></Ico>
const IconLoop = () => (
  <svg width="16" height="16" viewBox="0 0 16 16" fill="none" stroke="#000080" strokeWidth="1.4" className="shrink-0">
    <path d="M3 10V7a3 3 0 0 1 3-3h5M13 6v3a3 3 0 0 1-3 3H5" />
    <path d="M9 1l3 3-3 3M7 9l-3 3 3 3" />
  </svg>
)
const IconBell = () => (
  <svg width="18" height="18" viewBox="0 0 18 18" className="shrink-0">
    <path d="M6 1h6l1 3 3 5v6l-1 2H3l-1-2V9l3-5z" fill="#101050" stroke="#000" />
    <circle cx="9" cy="9" r="5" fill="#e8e020" stroke="#000" />
    <circle cx="9" cy="9" r="2" fill="#fff" stroke="#000" />
    <path d="M3 15h12v2H3z" fill="#000080" />
  </svg>
)
const IconPencil = () => <Ico w={18} h={18}><path d="M12 1l4 2-8 13-4 1 0-4z" fill="#f0c020" stroke="#000" shapeRendering="auto" /><path d="M4 13l-1 4 3-1z" fill="#000" shapeRendering="auto" /></Ico>
const IconLine = () => <Ico><path d="M2 15L15 1" stroke="#000" shapeRendering="auto" /></Ico>
const IconEraser = () => <Ico><path d="M1 11L9 3h6l-1 3-8 8H2z" fill="#f8f8c0" stroke="#000" shapeRendering="auto" /><path d="M1 11h5l8-8" fill="none" stroke="#000" shapeRendering="auto" /></Ico>
const IconMarquee = () => <Ico><rect x="1.5" y="2.5" width="13" height="11" fill="none" stroke="#000" strokeDasharray="2 1" /></Ico>
const IconSpeaker = () => <Ico h={20}><path d="M2 7h3l4-4v14l-4-4H2z" fill="#e0e000" stroke="#000" shapeRendering="auto" /><path d="M11 6c1 2 1 6 0 8M13 4c2 3 2 9 0 12" fill="none" stroke="#000" shapeRendering="auto" /></Ico>
const IconLayers = ({ c, thick }) => (
  <Ico w={18} h={16}>
    {[2, 6, 10].map(y => <path key={y} d={`M3.5 ${y + 0.5}h13l-2 3h-13z`} fill={c} stroke="#000" strokeWidth={thick ? 1.5 : 1} />)}
  </Ico>
)
const IconFish = () => (
  <Ico w={18} h={14}>
    <path d="M0 3h3v2h2V3h2V1h6v2h3v2h2v4h-2v2h-3v2H7v-2H5V9H3v2H0V8h2V6H0z" fill="#e00000" />
    <rect x="13" y="4" width="4" height="5" fill="#fff" />
    <rect x="14" y="5" width="2" height="2" fill="#000" />
    <path d="M6 4h2v2H6zM9 7h2v2H9z" fill="#000" />
  </Ico>
)
const AppIcon = () => (
  <svg width="18" height="18" viewBox="0 0 18 18" shapeRendering="crispEdges" className="shrink-0">
    <path d="M1 1h15v7h-3v2H4V8H1z" fill="#206020" />
    <path d="M3 1h3v2H3zM9 2h3v2H9zM5 5h2v2H5zM12 5h2v2h-2z" fill="#60a030" />
    <path d="M6 10h5v7H6z" fill="#802020" />
    <path d="M2 1h1v9H2z" fill="#000" />
  </svg>
)
const MdiIcon = () => (
  <svg width="14" height="16" viewBox="0 0 14 16" shapeRendering="crispEdges" className="shrink-0">
    <path d="M0.5 0.5h9l4 4v11h-13z" fill="#fff" stroke="#000080" />
    <path d="M2 6h10M2 11h10M7 3v11M4 4h6" stroke="#000080" fill="none" />
  </svg>
)

/* ---------- right hand lists ---------- */
const TRACKS = [
  ['1-"Liberation"', 'text-[#0000ff]'],
  ['2-Written by Tristan "Blurr"', 'text-[#008080]'],
  ['3-4/11/25', 'text-[#008000]'],
  ['4-OST Composing Jam:', 'text-[#808000]'],
  ['5-https://www.youtube', 'text-[#ff0000]'],
  ['6-Thanks For Listening!', 'text-[#ff0080]'],
  ['7-As always, feel free to', 'text-[#800080]'],
  ['8-7 days from my birthd', 'text-white bg-[#8000ff]'],
  ['9-', 'text-[#0000ff]'],
  ['10-', 'text-[#008080]'],
  ['11-', 'text-[#008000]'],
  ['12-', 'text-[#808000]'],
  ['13-', 'text-[#ff0000]'],
  ['14-', 'text-[#ff0080]'],
  ['15-', 'text-[#800080]'],
  ['16-', 'text-[#8000ff]'],
  ['17-', 'text-[#0000ff]'],
]
const CTRLS = ['Tempo', 'Velocity', 'ChannelAfterTouch', 'PitchBend', 'CC#0-Bank Select MSB', 'CC#1-Modulation', 'CC#2-', 'CC#3-', 'CC#4-', 'CC#5-']

function Check({ on }) {
  return (
    <div className="flex h-[13px] w-[13px] shrink-0 items-center justify-center border border-[#333] bg-white">
      {on && (
        <svg width="11" height="11" viewBox="0 0 11 11" fill="none" stroke="#555" strokeWidth="1.4" className="shrink-0">
          <path d="M1 5l3 4 6-8" />
        </svg>
      )}
    </div>
  )
}

const StatusPane = ({ w, children }) => (
  <div className={`flex h-full shrink-0 items-center border-l border-[#d4d4d4] pl-[4px] text-[12px] text-black ${w}`}>{children}</div>
)

export default function App() {
  const measures = Array.from({ length: 145 }, (_, i) => i + 1)
  return (
    <div className="flex h-[1399px] w-[2560px] flex-col overflow-hidden bg-white [font-family:Roboto,sans-serif] text-[12px] text-black">
      {/* Title bar */}
      <div className="flex h-[22px] shrink-0 items-center pl-[2px]">
        <AppIcon />
        <span className="ml-[3px]">Sekaiju8.0 - [Liberation.mid:2(Piano Roll)]</span>
        <div className="ml-auto flex items-center">
          <svg width="12" height="12" viewBox="0 0 12 12" className="mr-[34px]"><path d="M1 6h10" stroke="#000" /></svg>
          <svg width="12" height="12" viewBox="0 0 12 12" fill="none" stroke="#000" className="mr-[34px]"><rect x="1.5" y="3.5" width="7" height="7" /><path d="M3.5 3.5v-2h7v7h-2" /></svg>
          <svg width="12" height="12" viewBox="0 0 12 12" fill="none" stroke="#000" className="mr-[19px]"><path d="M1 1l10 10M11 1L1 11" /></svg>
        </div>
      </div>

      {/* Menu bar */}
      <div className="flex h-[20px] shrink-0 items-center pl-[8px]">
        <div className="w-[23px]"><MdiIcon /></div>
        <span className="w-[31px]">File</span>
        <span className="w-[34px]">Edit</span>
        <span className="w-[39px]">View</span>
        <span className="w-[54px]">Control</span>
        <span className="w-[44px]">Setup</span>
        <span className="w-[58px]">Window</span>
        <span>Help</span>
        <div className="ml-auto mr-[2px] flex gap-[3px]">
          {['M4 12h8', 'M5 6h6v5H5zM7 6V4h6v5h-2', 'M4 4l8 8M12 4l-8 8'].map(d => (
            <div key={d} className="flex h-[17px] w-[17px] items-center justify-center border border-[#e0e0e0]">
              <svg width="16" height="16" viewBox="0 0 16 16" fill="none" stroke="#607080" strokeWidth="1.4"><path d={d} /></svg>
            </div>
          ))}
        </div>
      </div>
      <div className="h-[2px] shrink-0 border-b border-[#a0a0a0] bg-[#f0f0f0]" />

      {/* Standard toolbar */}
      <div className="h-[32px] shrink-0 border-b border-[#a0a0a0]">
        <div className="relative flex h-full w-[424px] items-center border-r border-[#a0a0a0] pl-[10px]">
          <Grip />
          <Btn><IconNew /></Btn><Btn><IconOpen /></Btn><Btn><IconSave /></Btn>
          <Sep />
          <Btn><IconPrint /></Btn><Btn><IconPreview /></Btn>
          <Sep />
          <Btn><IconCut /></Btn><Btn><IconCopy /></Btn><Btn><IconPaste /></Btn><Btn><IconDel /></Btn>
          <Sep />
          <Btn><IconUndo /></Btn><Btn><IconRedo /></Btn>
          <Sep />
          <Btn><IconTracks /></Btn><Btn><IconRoll /></Btn><Btn><IconGrid /></Btn><Btn><IconScore /></Btn>
          <Sep />
          <Btn><IconHelp /></Btn>
        </div>
      </div>

      {/* Transport toolbar */}
      <div className="h-[32px] shrink-0 border-b border-[#a0a0a0]">
        <div className="relative flex h-full w-[1003px] items-center border-r border-[#a0a0a0] pl-[11px]">
          <Grip />
          <Box w="w-[99px]">00:00:00:000</Box>
          <div className="w-[9px] shrink-0"><Sep /></div>
          <Box w="w-[100px]">00001:01:000</Box>
          <Sep />
          <Btn><IconRew /></Btn><Btn><IconPlay /></Btn><Btn><IconRec /></Btn><Btn><IconFf /></Btn>
          <Sep />
          <div className="flex h-[19px] w-[117px] shrink-0 items-center justify-between bg-[#f0f0f0] px-[3px]">
            <Chev dir="left" />
            <div className="mr-[2px] ml-[3px] h-full w-[17px] bg-[#cdcdcd]" />
            <div className="flex-1" />
            <Chev dir="right" />
          </div>
          <Sep />
          <Btn><Watch mark={markPause} /></Btn><Btn><Watch mark={markStep} /></Btn><Btn active><Watch mark={markPlay} /></Btn><Btn><Watch mark={markFf} /></Btn><Btn><IconIn /></Btn>
          <Sep />
          <Btn><IconSync /></Btn><Btn><IconSyncOff /></Btn>
          <Sep />
          <div className="w-[3px] shrink-0" />
          <Sel w="w-[100px]">120-Quarter N</Sel>
          <Sep />
          <Btn active w="w-[22px]"><IconLoop /></Btn>
          <div className="w-[9px] shrink-0"><Sep /></div>
          <Sel w="w-[60px]">0</Sel>
          <Sep />
          <Box w="w-[60px]">4/4, 0</Box>
          <Sep />
          <Box w="w-[60px]">171.00</Box>
          <Sep />
          <Btn><IconBell /></Btn>
        </div>
      </div>

      {/* Edit toolbar */}
      <div className="flex h-[32px] shrink-0 items-center pl-[4px]">
        <Btn active><IconPencil /></Btn><Btn><IconLine /></Btn><Btn><IconEraser /></Btn><Btn><IconMarquee /></Btn><Btn><IconSpeaker /></Btn>
        <Sep />
        <Sel w="w-[160px]" white color="text-[#008080]">2-Written by Tristan "Blurr"</Sel>
        <Sep />
        <Sel w="w-[40px]">1</Sel>
        <Sep />
        <Sel w="w-[100px]">30-Semiquave</Sel>
        <Sep />
        <Sel w="w-[49px]" white>100</Sel>
        <div className="w-[9px] shrink-0"><Sep /></div>
        <Sel w="w-[50px]" white>120</Sel>
        <Sep />
        <Sel w="w-[120px]">Velocity</Sel>
        <Sep />
        <Sel w="w-[100px]">1-Free</Sel>
        <Sep />
        <Btn><IconLayers c="#ffff00" /></Btn><Btn><IconLayers c="#ffff00" thick /></Btn>
        <Sep />
        <Btn><IconLayers c="#00ffff" /></Btn><Btn><IconLayers c="#00ffff" thick /></Btn>
        <Sep />
        <Btn><IconFish /></Btn>
      </div>

      {/* Document area */}
      <div className="flex h-[1240px] shrink-0 border-t-2 border-[#404040] bg-[#f0f0f0]">
        <div className="flex w-[2390px] shrink-0 flex-col border-l-2 border-[#404040]">
          {/* Piano roll */}
          <div className="flex h-[1068px] shrink-0 flex-col">
            <div className="flex h-[33px] shrink-0">
              <div className="w-[65px] shrink-0" />
              <div className="relative w-[2307px] shrink-0 overflow-hidden">
                <div className="absolute left-[0px] top-[4px] h-[13px] w-[3px] bg-[#0000ff]" />
                <span className="absolute left-[4px] top-[1px] text-[12px] text-[#0000ff]">171.00, 4/4, 0#, "Liberation"</span>
                <div className="absolute left-[767px] top-[4px] h-[13px] w-[3px] bg-[#0000ff]" />
                <span className="absolute left-[771px] top-[1px] text-[12px] text-[#0000ff]">15</span>
                <div className="absolute left-[783px] top-[4px] h-[13px] w-[4px] bg-[#0000ff]" />
                <span className="absolute left-[788px] top-[1px] text-[12px] text-[#0000ff]">171.00</span>
                <div className="absolute bottom-0 left-0 flex h-[16px]">
                  {measures.map(m => (
                    <div key={m} className="flex h-full w-[16px] shrink-0 items-center justify-center whitespace-nowrap border-r border-[#909090] text-[12px] leading-[16px] text-black">{m}</div>
                  ))}
                </div>
              </div>
              <div className="flex w-[16px] shrink-0 items-center justify-center"><Chev dir="up" /></div>
            </div>
            <div className="flex h-[1035px] shrink-0">
              <Keyboard />
              <RollCanvas />
              <div className="flex w-[16px] shrink-0 flex-col items-center">
                <div className="mt-[290px] h-[580px] w-full bg-[#cdcdcd]" />
                <div className="flex-1" />
                <Chev />
                <div className="mt-[4px] flex h-[16px] w-[15px] items-center justify-center border border-[#adadad] text-[13px] font-bold leading-none">-</div>
                <div className="mt-[1px] flex h-[16px] w-[15px] items-center justify-center border border-[#adadad] text-[13px] font-bold leading-none">+</div>
              </div>
            </div>
          </div>
          <div className="h-[7px] shrink-0" />
          {/* Velocity graph */}
          <div className="flex h-[163px] shrink-0 flex-col border-t-2 border-b border-t-[#202020] border-b-[#a0a0a0]">
            <div className="flex h-[143px] shrink-0">
              <div className="relative w-[65px] shrink-0 border-r border-[#808000]">
                {[127, 112, 96, 80, 64, 48, 32, 16, 0].map(v => (
                  <div key={v} className="absolute left-0 right-0 flex items-center" style={{ top: 135 - v - 7 }}>
                    <div className="h-px flex-1 bg-black" />
                    <span className="w-[23px] text-center text-[12px] leading-[14px]">{v}</span>
                    <div className="h-px w-[18px] bg-black" />
                  </div>
                ))}
              </div>
              <VelocityCanvas />
              <div className="flex w-[16px] shrink-0 flex-col items-center">
                <div className="flex h-[16px] items-center"><Chev dir="up" /></div>
                <div className="h-[75px] w-full bg-[#cdcdcd]" />
                <div className="mt-[4px]"><Chev /></div>
                <div className="flex-1" />
                <div className="flex h-[16px] w-[15px] items-center justify-center border border-[#adadad] text-[13px] font-bold leading-none">-</div>
                <div className="mt-[1px] flex h-[16px] w-[15px] items-center justify-center border border-[#adadad] text-[13px] font-bold leading-none">+</div>
              </div>
            </div>
            <div className="flex h-[16px] shrink-0 items-center">
              <div className="flex w-[17px] shrink-0 justify-center"><Chev dir="left" /></div>
              <div className="h-full w-[1239px] bg-[#cdcdcd]" />
              <div className="flex-1" />
              <Chev dir="right" />
              <div className="ml-[4px] flex h-[15px] w-[15px] items-center justify-center border border-[#adadad] text-[13px] font-bold leading-none">-</div>
              <div className="ml-[2px] flex h-[15px] w-[15px] items-center justify-center border border-[#adadad] text-[13px] font-bold leading-none">+</div>
              <div className="w-[18px] shrink-0" />
            </div>
          </div>
        </div>

        {/* Track and controller lists */}
        <div className="flex flex-1 flex-col pl-[5px]">
          <div className="flex h-[1068px] shrink-0 border-l-2 border-[#404040]">
            <div className="flex w-[159px] flex-col">
              <div className="flex flex-1">
                <div className="w-[141px] overflow-hidden bg-white pl-[2px] pt-[3px]">
                  {TRACKS.map(([name, cls]) => (
                    <div key={name} className="flex h-[15px] items-center gap-[3px]">
                      <Check on />
                      <span className={`flex-1 overflow-hidden whitespace-nowrap text-[12px] leading-[15px] ${cls}`}>{name}</span>
                    </div>
                  ))}
                </div>
                <div className="flex w-[18px] flex-col items-center pt-[6px]">
                  <Chev dir="up" color="#c8c8c8" />
                  <div className="flex-1" />
                  <div className="pb-[3px]"><Chev color="#c8c8c8" /></div>
                </div>
              </div>
              <div className="flex h-[18px] shrink-0 items-center justify-between px-[6px] pr-[24px]">
                <Chev dir="left" color="#c8c8c8" />
                <Chev dir="right" color="#c8c8c8" />
              </div>
            </div>
          </div>
          <div className="h-[7px] shrink-0" />
          <div className="flex flex-1 border-l-2 border-t-2 border-[#202020]">
            <div className="flex w-[160px] flex-col">
              <div className="flex h-[143px] shrink-0">
                <div className="w-[143px] overflow-hidden bg-white pl-[2px]">
                  {CTRLS.map(name => (
                    <div key={name} className="flex h-[15px] items-center gap-[3px]">
                      <Check on={name === 'Velocity'} />
                      <span className={`flex-1 whitespace-nowrap text-[12px] leading-[15px] ${name === 'Velocity' ? 'bg-[#0078d7] text-white' : 'text-black'}`}>{name}</span>
                    </div>
                  ))}
                </div>
                <div className="flex w-[17px] flex-col items-center">
                  <div className="flex h-[16px] items-center"><Chev dir="up" /></div>
                  <div className="h-[17px] w-full bg-[#cdcdcd]" />
                  <div className="flex-1" />
                  <div className="pb-[3px]"><Chev /></div>
                </div>
              </div>
              <div className="flex h-[16px] shrink-0 items-center justify-between pl-[4px] pr-[23px]">
                <Chev dir="left" color="#c8c8c8" />
                <Chev dir="right" color="#c8c8c8" />
              </div>
            </div>
          </div>
        </div>
      </div>

      {/* Status bar */}
      <div className="flex h-[19px] shrink-0 items-center border-t border-[#e0e0e0] bg-[#f0f0f0]">
        <div className="w-[1843px] shrink-0 pl-[2px] text-[12px]">Ready</div>
        <StatusPane w="w-[71px]">Format1</StatusPane>
        <StatusPane w="w-[72px]">17Tracks</StatusPane>
        <StatusPane w="w-[104px]">120TPQN</StatusPane>
        <StatusPane w="w-[163px]">IN</StatusPane>
        <StatusPane w="w-[164px]">OUT</StatusPane>
        <StatusPane w="w-[40px]" />
        <StatusPane w="w-[31px]" />
        <StatusPane w="w-[36px]">NUM</StatusPane>
        <StatusPane w="w-[36px]" />
      </div>
    </div>
  )
}
